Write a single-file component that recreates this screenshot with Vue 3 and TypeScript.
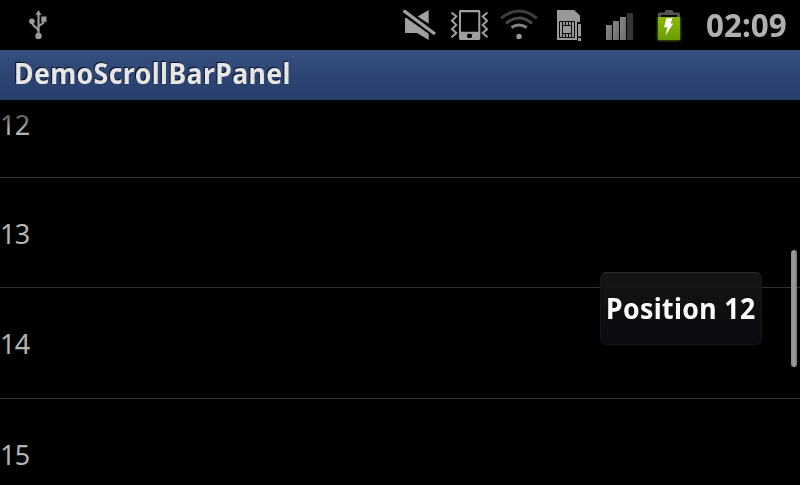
<script setup lang="ts">
interface Row {
  id: number
  label: string
}

const title = 'DemoScrollBarPanel'
const clock = '02:09'
const position = 'Position 12'
const rows: Row[] = [12, 13, 14, 15].map((n) => ({ id: n, label: String(n) }))
const left = [[56.5, 12.5], [61.3, 16.4], [57, 20.7], [61.3, 24.9], [57, 29.1], [61.3, 33], [56.5, 37.3]]
const zigLeft = left.map(([x, y]) => `${x},${y}`).join(' ')
const zigRight = left.map(([x, y]) => `${148.4 - x},${y}`).join(' ')
</script>

<template>
  <div class="screen">
    <header class="status">
      <svg class="usb" width="20" height="50" viewBox="28 0 20 50">
        <g fill="none" stroke="#999" stroke-width="2">
          <path d="M38.5 14V35" stroke-width="2.2" />
          <path d="M32 22C32 27 38 27 38.5 31" />
          <path d="M44 20C44.5 25 39 23.500 38.500 27" />
        </g>
        <g fill="#999">
          <path d="M38.500 10L41.500 15H35.500Z" />
          <circle cx="31.900" cy="21.300" r="2.800" />
          <path d="M41.300 16.500H46.500V21.700H41.300Z" />
          <circle cx="38.500" cy="36" r="3.200" />
        </g>
      </svg>
      <div class="icons">
        <svg width="100" height="50" viewBox="0 0 100 50">
          <g fill="#a0a0a0">
            <path d="M22.700 16.500L33.700 10V23.700Z" />
            <path d="M10 18H11.500L33.700 33.700V40L22 33H10Z" />
          </g>
          <path d="M8.600 10.700L40 34" fill="none" stroke="#a0a0a0" stroke-width="3.300" />
          <path fill="#a0a0a0" fill-rule="evenodd" d="M65 10H84.300L85.300 11V39L84.300 40H65L64 39V11ZM66 12.300V31.700H83.300V12.300ZM73 33.700L72 34.700V37L73 38H76L77 37V34.700L76 33.700Z" />
          <polyline :points="zigLeft" fill="none" stroke="#a0a0a0" stroke-width="2" />
          <polyline :points="zigRight" transform="translate(.600 0)" fill="none" stroke="#a0a0a0" stroke-width="2" />
        </svg>
        <svg width="100" height="50" viewBox="0 0 100 50">
          <g fill="none" stroke-width="3">
            <path d="M6 18.300Q24 3.700 42 18.300" stroke="#3d3d3d" />
            <path d="M11 23.300Q24 12.700 37 23.300" stroke="#484848" />
            <path d="M16.500 27.600Q24 22.500 31.700 27.600" stroke="#858585" />
          </g>
          <circle cx="24" cy="36.500" r="2.700" fill="#999" />
          <path d="M62 10H79L85 15.500V22L82 24V40H62Z" fill="#999" />
          <path d="M64.500 21.500H79.500V37.500H64.500ZM67.500 25.500H76.500V33.500H67.500ZM67.500 21.500V25.500M70.500 21.500V25.500M73.500 21.500V25.500M76.500 21.500V25.500M67.500 33.500V37.500M70.500 33.500V37.500M73.500 33.500V37.500M76.500 33.500V37.500" fill="none" stroke="#080808" />
          <path d="M82 22H87V42H82Z" fill="#000" />
          <path d="M83 24H86V36.500H83ZM83 38H86V41H83Z" fill="#999" />
        </svg>
        <svg width="100" height="50" viewBox="0 0 100 50">
          <defs>
            <linearGradient id="bar" x1="0" y1="0" x2="1" y2="1">
              <stop offset="0" stop-color="#888" />
              <stop offset="1" stop-color="#6b6b6b" />
            </linearGradient>
            <linearGradient id="cell" x1="0" y1="0" x2="0" y2="1">
              <stop offset="0" stop-color="#8db800" />
              <stop offset="1" stop-color="#6b9c00" />
            </linearGradient>
            <filter id="glow" x="-30%" y="-30%" width="160%" height="160%">
              <feGaussianBlur stdDeviation="1.300" />
            </filter>
          </defs>
          <g fill="url(#bar)">
            <rect x="11" y="25" width="6" height="15" rx=".5" />
            <rect x="18" y="21" width="6" height="19" rx=".5" />
            <rect x="25" y="17" width="6" height="23" rx=".5" />
          </g>
          <rect x="32" y="13" width="6" height="27" rx=".5" fill="#353535" />
          <rect x="62.500" y="17" width="23" height="23.500" rx="1" fill="#547800" filter="url(#glow)" />
          <path d="M63 17V13.500L64 12.500H69.500L70.500 10H77.500L78.500 12.500H84L85 13.500V17Z" fill="#545454" />
          <path d="M66 15H82V17H66Z" fill="#090909" />
          <rect x="63" y="17" width="22" height="23" rx=".7" fill="url(#cell)" />
          <path d="M71.500 18.300H77.500L75.500 23.500H78.300L70.500 35.500L72.300 27.300H69Z" fill="#fff" />
        </svg>
      </div>
      <div class="clock"><span>{{ clock }}</span></div>
    </header>

    <div class="title"><h1>{{ title }}</h1></div>

    <main class="list">
      <ul>
        <li v-for="row in rows" :key="row.id" :class="'row-' + row.id">{{ row.label }}</li>
      </ul>
      <div class="fade"></div>
      <div class="thumb"></div>
      <div class="panel"><span>{{ position }}</span></div>
    </main>
  </div>
</template>

<style>
body {
  background: #000;
}
</style>

<style scoped>
.screen {
  display: flex;
  flex-direction: column;
  width: 800px;
  height: 485px;
  overflow: hidden;
  background: #000;
  font-family: "Noto Sans", "Open Sans", sans-serif;
}
.status {
  display: flex;
  flex: none;
  height: 50px;
}
svg {
  display: block;
  flex: none;
}
.usb {
  margin-left: 28px;
}
.icons {
  display: flex;
  margin-left: 347px;
}
.clock {
  margin-left: 11px;
  white-space: nowrap;
  color: #b0b0b0;
  font-size: 32px;
  font-weight: 700;
  line-height: 50px;
}
.clock span {
  display: inline-block;
  transform: scaleX(0.98);
  transform-origin: 0 50%;
}
.title {
  flex: none;
  height: 50px;
  padding-left: 14px;
  background: linear-gradient(#36507f, #304877 35%, #283e6b);
}
.title h1 {
  display: inline-block;
  margin: 0;
  color: #e6e6e6;
  font-size: 28px;
  font-weight: 700;
  letter-spacing: 0.45px;
  line-height: 47px;
  white-space: nowrap;
  text-shadow: -1px -1px 1px #0b1222;
  transform: scaleX(0.95);
  transform-origin: 0 50%;
}
.list {
  position: relative;
  flex: 1;
  overflow: hidden;
}
ul {
  display: flex;
  flex-direction: column;
  margin: 0;
  padding: 0;
  list-style: none;
}
li {
  box-sizing: border-box;
  flex: none;
  height: 111px;
  border-bottom: 1px solid #323232;
  color: #b4b4b4;
  font-size: 27px;
  letter-spacing: -0.6px;
  line-height: 111px;
}
.row-12 {
  height: 78px;
  line-height: 50px;
}
.row-13 {
  height: 110px;
  line-height: 111px;
}
.fade {
  position: absolute;
  top: 0;
  left: 0;
  width: 100%;
  height: 30px;
  background: linear-gradient(#000, transparent);
}
.thumb {
  position: absolute;
  top: 149.5px;
  left: 790.7px;
  width: 6.8px;
  height: 117px;
  border-radius: 3px;
  background: linear-gradient(90deg, #8b8b8b, #a09e9e 50%, #777);
}
.panel {
  position: absolute;
  top: 172px;
  left: 600px;
  box-sizing: border-box;
  width: 162px;
  height: 73px;
  padding-left: 5px;
  border: 1px solid #151616;
  border-top-color: #292a2a;
  border-radius: 6px;
  background: linear-gradient(rgba(23, 25, 24, 0.87), rgba(12, 13, 16, 0.95) 75%);
  color: #fff;
  font-size: 28px;
  font-weight: 700;
  letter-spacing: 0.42px;
  line-height: 71px;
  white-space: nowrap;
}
.panel span {
  display: inline-block;
  transform: scaleX(0.95);
  transform-origin: 0 50%;
}
</style>
